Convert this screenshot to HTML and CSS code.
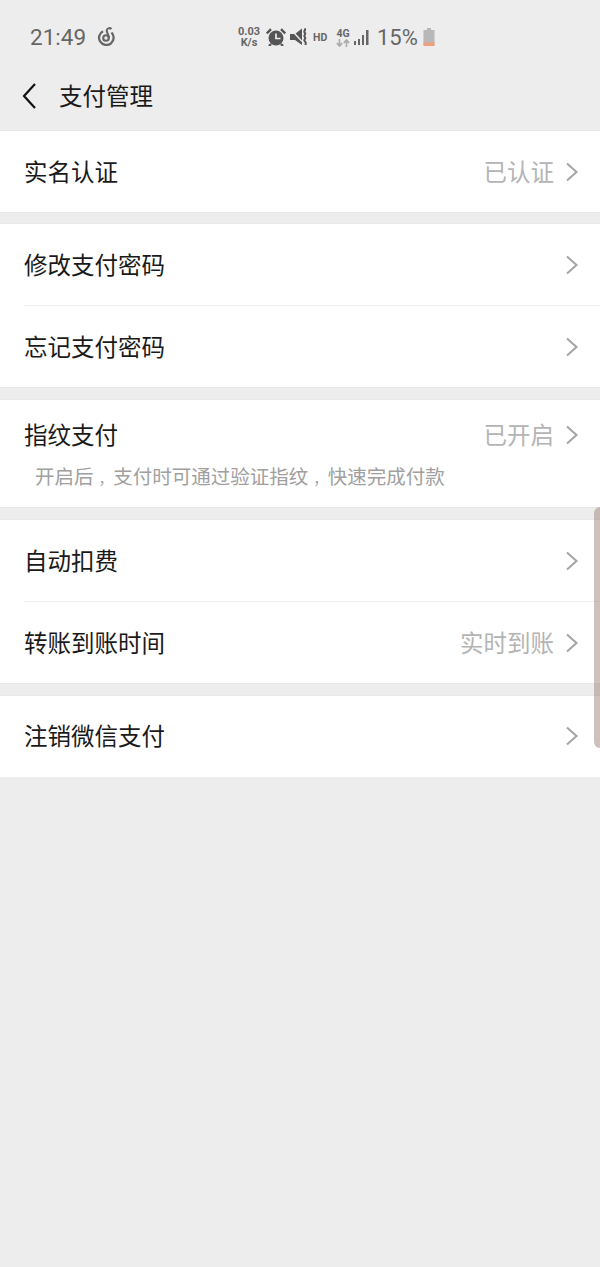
FILE: index.html
```html
<!DOCTYPE html>
<html lang="zh-CN">
<head>
<meta charset="utf-8">
<title>支付管理</title>
<link rel="stylesheet" href="styles.css">
</head>
<body>
<svg class="defs" width="0" height="0" aria-hidden="true"><symbol id="chev" viewBox="0 0 14 20"><path d="M2 1.500 L11.500 10 L2 18.500" fill="none" stroke="currentColor" stroke-width="2.100"/></symbol></svg>
<div class="page">
  <div class="status">
    <span class="time">21:49</span>
    <svg class="netease" viewBox="0 0 18 20"><path d="M6 5.200 A7.300 7.300 0 1 0 14.500 6.500" fill="none" stroke="#666" stroke-width="2.300"/><circle cx="9" cy="12" r="2.800" fill="none" stroke="#666" stroke-width="2.100"/><path d="M11.800 12 C11.800 8 9.200 6.500 9.800 4 C10.300 2 13 1.500 14.500 3" fill="none" stroke="#666" stroke-width="2.100"/></svg>
    <div class="status-mid">
      <span class="speed">0.03<br>K/s</span>
      <svg class="ic-alarm" viewBox="0 0 20 18"><circle cx="10" cy="10" r="7.500" fill="#555"/><path d="M10 5.500v5h4.500" fill="none" stroke="#ededed" stroke-width="1.700"/><path d="M.8 5.500 L5 1.200 M19.200 5.500 L15 1.200 M5 16 L3 18 M15 16 L17 18" stroke="#555" stroke-width="2.400"/></svg>
      <svg class="ic-mute" viewBox="0 0 18 18"><path d="M1 6h5l7-5.500V17l-7-5H1z" fill="#555"/><path d="M1 .5 L13 13.500" stroke="#ededed" stroke-width="1.300"/><path d="M15.500 .5c2 1.600-1.500 2.600 .3 4.200s-1.800 2.700 0 4.300-1.800 2.700 0 4.300 .7 2.500 .7 3.700" fill="none" stroke="#555" stroke-width="2"/></svg>
      <span class="hd">HD</span>
      <span class="net"><span class="net-4g">4G</span><svg class="net-arrows" viewBox="0 0 14 8"><path d="M3.500 0v7M.8 4l2.700 3L6.200 4" fill="none" stroke="#aaa" stroke-width="1.600"/><path d="M10.500 8V1M7.800 4l2.700-3 2.700 3" fill="none" stroke="#aaa" stroke-width="1.600"/></svg></span>
      <svg class="ic-signal" viewBox="0 0 17 16"><path d="M1 12h2v4H1zM5 10h2v6H5zM9 6h2v10H9zM13 1h2.500v15H13z" fill="#666"/></svg>
      <span class="pct">15%</span>
      <svg class="ic-batt" viewBox="0 0 12 18"><path d="M4 0h4v2h3.500v15H.5V2H4z" fill="#b8b8b8"/><path d="M.5 14.500h11V18H.5z" fill="#ef9f7c"/></svg>
    </div>
  </div>
  <header class="nav">
    <svg class="back" viewBox="0 0 16 28"><path d="M14 2 L3 14 L14 26" fill="none" stroke="#111" stroke-width="2.200"/></svg>
    <h1 class="title">支付管理</h1>
  </header>
  <section class="group group-first">
    <div class="row"><span class="label">实名认证</span><span class="value">已认证</span><svg class="chev"><use href="#chev"/></svg></div>
  </section>
  <section class="group">
    <div class="row"><span class="label">修改支付密码</span><svg class="chev"><use href="#chev"/></svg></div>
    <div class="row row-next"><span class="label">忘记支付密码</span><svg class="chev"><use href="#chev"/></svg></div>
  </section>
  <section class="group">
    <div class="row row-tall"><span class="label">指纹支付</span><span class="value">已开启</span><svg class="chev"><use href="#chev"/></svg></div>
    <p class="note">开启后<span class="comma">，</span>支付时可通过验证指纹<span class="comma">，</span>快速完成付款</p>
  </section>
  <section class="group">
    <div class="row"><span class="label">自动扣费</span><svg class="chev"><use href="#chev"/></svg></div>
    <div class="row row-next"><span class="label">转账到账时间</span><span class="value">实时到账</span><svg class="chev"><use href="#chev"/></svg></div>
  </section>
  <section class="group group-last">
    <div class="row"><span class="label">注销微信支付</span><svg class="chev"><use href="#chev"/></svg></div>
  </section>
  <div class="scroll-handle"></div>
</div>
</body>
</html>
```
FILE: styles.css
```css
* { box-sizing: border-box; }
html, body { margin: 0; padding: 0; }
body { background: #ededed; font-family: "Noto Sans CJK SC", "Noto Sans", sans-serif; }
.defs { position: absolute; }
.page { position: relative; width: 600px; height: 1267px; overflow: hidden; background: #ededed; }
.status { height: 72px; padding: 22px 0 0 30px; display: flex; align-items: flex-start; position: relative; color: #666; }
.time { font-family: Roboto, sans-serif; font-size: 22.500px; line-height: 30px; color: #666; }
.netease { width: 18px; height: 20px; margin: 4px 0 0 11px; }
.status-mid { position: absolute; left: 237px; top: 25px; display: flex; align-items: center; height: 24px; }
.speed { font-family: Roboto, sans-serif; font-weight: 700; font-size: 11px; line-height: 11px; text-align: center; color: #666; width: 24px; }
.ic-alarm { width: 20px; height: 18px; margin-left: 5px; }
.ic-mute { width: 18px; height: 18px; margin-left: 3px; }
.hd { font-family: Roboto, sans-serif; font-weight: 700; font-size: 10.500px; color: #666; margin-left: 6px; width: 16px; }
.net { display: flex; flex-direction: column; align-items: center; margin-left: 7px; width: 14px; }
.net-4g { font-family: Roboto, sans-serif; font-weight: 700; font-size: 10.500px; line-height: 11px; color: #666; }
.net-arrows { width: 14px; height: 8px; }
.ic-signal { width: 17px; height: 16px; margin-left: 3px; }
.pct { font-family: Roboto, sans-serif; font-size: 22px; line-height: 24px; color: #666; margin: 2px 0 0 7px; }
.ic-batt { width: 12px; height: 18px; margin-left: 5px; }
.nav { height: 58px; display: flex; align-items: center; padding-left: 21px; padding-bottom: 12px; }
.back { width: 16px; height: 28px; margin-top: 1px; }
.title { margin: 0 0 0 22px; font-size: 23.500px; font-weight: 400; color: #1a1a1a; line-height: 34px; }
.group { background: #fff; border-top: 1px solid #e8e8e8; border-bottom: 1px solid #e8e8e8; margin-bottom: 11px; }
.group-first { margin-bottom: 10px; }
.group-last { border-bottom: 0; }
.group-last .row { height: 80.500px; }
.row { height: 81px; display: flex; align-items: center; padding: 0 21px 0 24px; }
.row-next { position: relative; margin-top: 1px; }
.row-next::before { content: ""; position: absolute; left: 24px; right: 0; top: -1px; height: 1px; background: #f0f0f0; }
.row-tall { height: 70px; padding-bottom: 1px; }
.label { flex: 1; font-size: 23.500px; color: #1a1a1a; line-height: 34px; margin-bottom: 2px; }
.value { font-size: 23.500px; color: #b4b4b4; line-height: 34px; margin: 0 11px 2px 0; }
.chev { width: 14px; height: 20px; color: #a6a6a6; display: block; }
.note { margin: -7px 0 0; height: 44px; padding-left: 35px; font-size: 19.500px; line-height: 26px; color: #a0a0a0; }
.comma { font-size: .75em; margin-left: 5px; }
.scroll-handle { position: absolute; left: 594px; top: 507px; width: 6px; height: 241px; background: rgba(165, 140, 132, .55); border-radius: 6px 0 0 6px; }
```
